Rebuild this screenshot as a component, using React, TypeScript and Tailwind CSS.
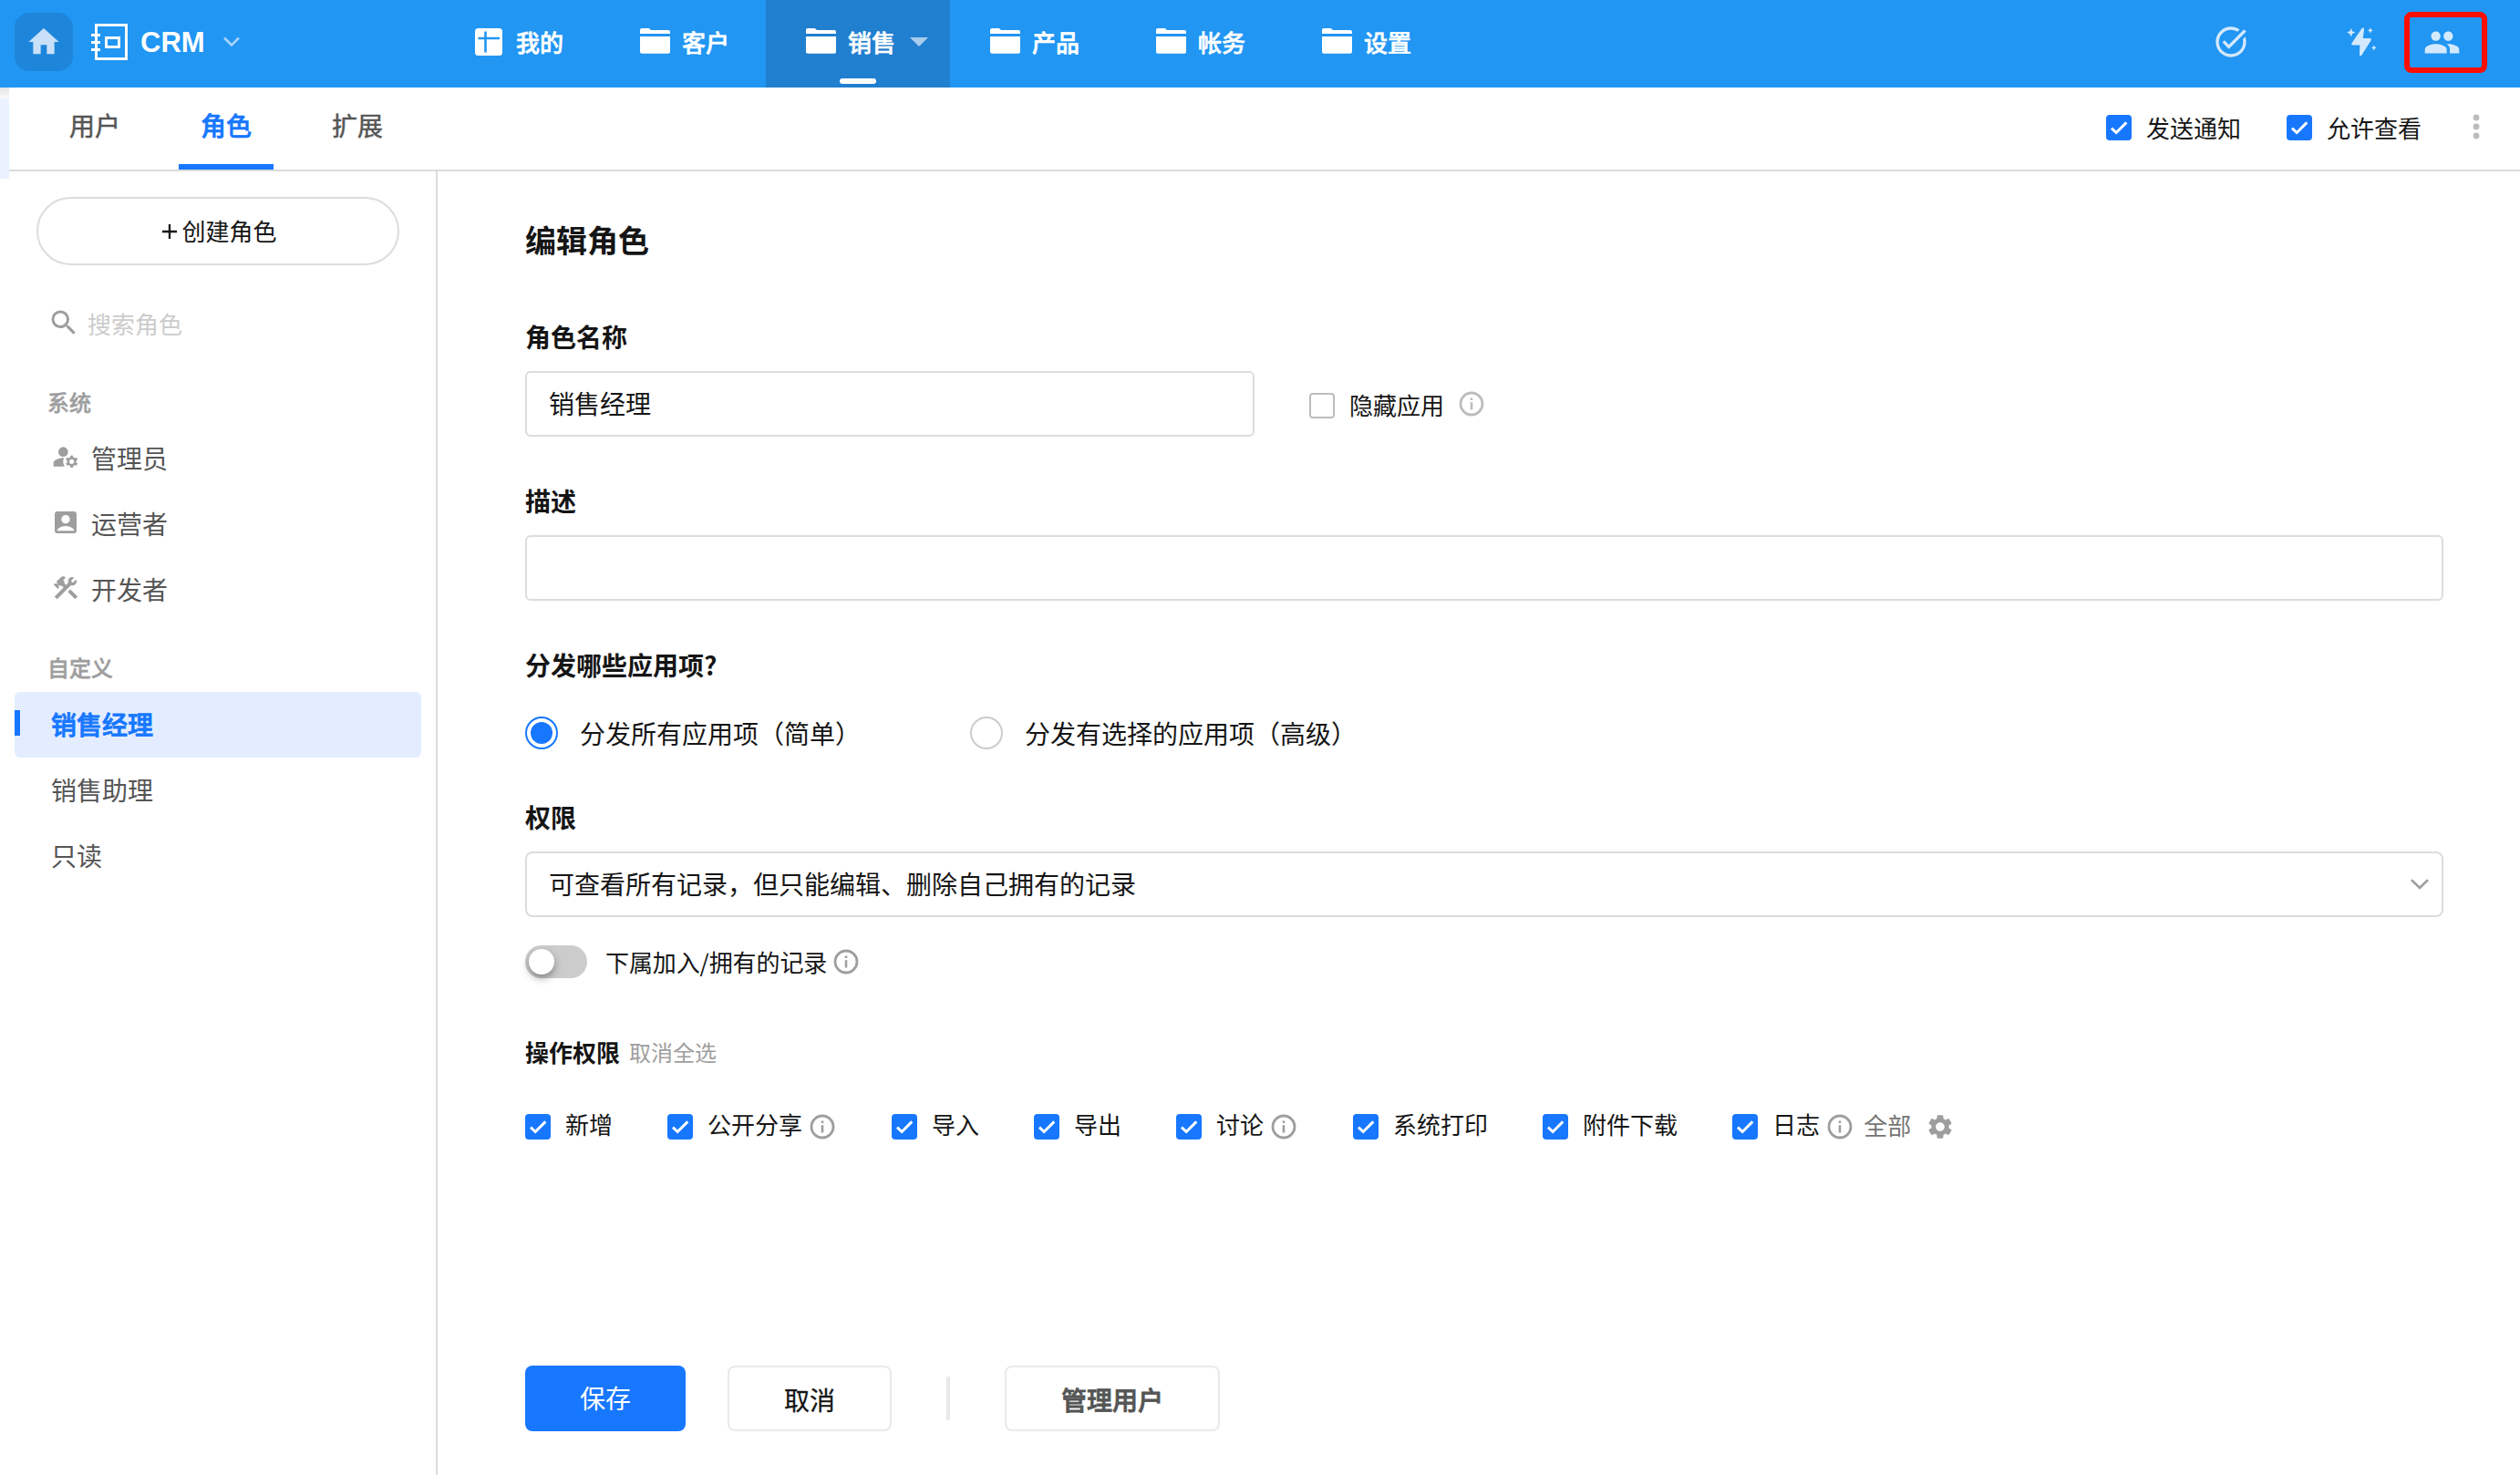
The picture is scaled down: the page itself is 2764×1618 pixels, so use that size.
import type { ReactNode } from "react";
import {
  MdAccountBox,
  MdConstruction,
  MdHome,
  MdManageAccounts,
  MdPeople,
  MdSearch,
  MdSettings,
  MdTaskAlt,
} from "react-icons/md";

type NavItem = {
  label: string;
  icon: ReactNode;
  active?: boolean;
};

type Permission = {
  label: string;
  info?: boolean;
};

const GridIcon = () => (
  <svg viewBox="0 0 34 34" className="w-[34px] h-[34px] shrink-0 overflow-visible">
    <rect x="1" y="2" width="30" height="30" rx="3.5" fill="#fff" />
    <path d="M4.5 13H28M12.5 5.5V28.5" stroke="#2196f3" strokeWidth="2.6" />
  </svg>
);

const FolderIcon = () => (
  <svg viewBox="0 0 34 34" className="w-[34px] h-[34px] shrink-0 overflow-visible">
    <path d="M0 8V4.2C0 2.8.8 2 2.2 2h7C10.8 2 11 4 12.5 4H31a2 2 0 0 1 2 2v2z" fill="#fff" />
    <path d="M0 11H33V27.8a2 2 0 0 1-2 2H2a2 2 0 0 1-2-2z" fill="#fff" />
  </svg>
);

const LogoIcon = () => (
  <svg viewBox="0 0 40 40" fill="none" stroke="#fff" className="w-10 h-10">
    <path d="M5.5 1.5H38.5V38.5H5.5zM0 12.5H10M0 20.5H10M0 28.5H10" strokeWidth="3" />
    <rect x="16.5" y="15.5" width="14" height="10" strokeWidth="3" />
  </svg>
);

const BoltIcon = () => (
  <svg viewBox="0 0 34 32" fill="currentColor" className="w-[34px] h-8">
    <path d="M16.8.8c1.2-.6 2.4 0 2.2 1.4L17.8 12h7.6c1.4 0 1.9 1 1.2 2.2L16.4 30.4c-.9 1.3-2.6 1-2.5-.6l.5-10.4H6.6c-1.3 0-1.8-1-1.1-2.2z" />
    <path d="M4.7.8 6 4.3 9.6 5.6 6 6.9 4.7 10.6 3.4 6.9 0 5.6 3.4 4.3zM25.8 0l.9 2.4 2.4.9-2.4.9-.9 2.5-.9-2.5-2.4-.9 2.4-.9zM29.8 19.2l.9 2.3 2.3.9-2.3.9-.9 2.4-.9-2.4-2.3-.9 2.3-.9z" />
  </svg>
);

const InfoIcon = ({ className = "text-[#9e9e9e]" }: { className?: string }) => (
  <svg viewBox="0 0 28 28" fill="none" stroke="currentColor" className={`w-7 h-7 shrink-0 ${className}`}>
    <circle cx="14" cy="14" r="12" strokeWidth="2.8" />
    <path d="M14 12.3V20.5M14 7.6V10" strokeWidth="2.6" />
  </svg>
);

const Checkbox = ({ checked = true }: { checked?: boolean }) =>
  checked ? (
    <span className="flex w-7 h-7 shrink-0 items-center justify-center rounded bg-[#1777ff]">
      <svg viewBox="0 0 28 28" fill="none" stroke="#fff" strokeWidth="3" className="w-7 h-7">
        <path d="M6 14.6 11.2 19.5 22.3 8.4" />
      </svg>
    </span>
  ) : (
    <span className="w-7 h-7 shrink-0 rounded border-2 border-[#bdbdbd]" />
  );

const navItems: NavItem[] = [
  { label: "我的", icon: <GridIcon /> },
  { label: "客户", icon: <FolderIcon /> },
  { label: "销售", icon: <FolderIcon />, active: true },
  { label: "产品", icon: <FolderIcon /> },
  { label: "帐务", icon: <FolderIcon /> },
  { label: "设置", icon: <FolderIcon /> },
];

const systemRoles = [
  { label: "管理员", icon: <MdManageAccounts className="w-8 h-8" /> },
  { label: "运营者", icon: <MdAccountBox className="w-8 h-8" /> },
  { label: "开发者", icon: <MdConstruction className="w-8 h-8" /> },
];

const permissions: Permission[] = [
  { label: "新增" },
  { label: "公开分享", info: true },
  { label: "导入" },
  { label: "导出" },
  { label: "讨论", info: true },
  { label: "系统打印" },
  { label: "附件下载" },
  { label: "日志", info: true },
];

const TopBar = () => (
  <header className="flex h-24 shrink-0 bg-[#2196f3] text-white">
    <div className="flex w-[476px] items-center pb-1 pl-4">
      <div className="flex w-16 h-16 items-center justify-center rounded-2xl bg-black/10">
        <MdHome className="w-10 h-10 text-[#c8e0f8]" />
      </div>
      <div className="ml-5">
        <LogoIcon />
      </div>
      <span className="ml-3.5 pt-px font-['Liberation_Sans'] text-[31px] leading-10 font-bold">CRM</span>
      <svg viewBox="0 0 18 12" fill="none" stroke="#a9d3fa" strokeWidth="2.6" className="ml-5 w-[18px] h-3">
        <path d="M1 1.5 9 9.5 17 1.5" />
      </svg>
    </div>

    <nav className="flex">
      {navItems.map((item) => (
        <div
          key={item.label}
          className={`relative flex items-center pb-1 pl-11 ${
            item.active ? "w-[202px] bg-[#217fd0]" : "w-[182px]"
          }`}
        >
          {item.icon}
          <span className="ml-3 text-[26px] leading-8 font-medium [-webkit-text-stroke:0.6px]">{item.label}</span>
          {item.active && (
            <>
              <svg viewBox="0 0 20 10" className="ml-4 w-5 h-[10px]">
                <path d="M0 0H20L10 10z" fill="#a9cbec" />
              </svg>
              <span className="absolute bottom-1 left-[81px] h-1.5 w-10 rounded-full bg-white" />
            </>
          )}
        </div>
      ))}
    </nav>

    <div className="ml-auto flex items-center pr-9 pb-1 text-[#d3e9fd]">
      <MdTaskAlt className="w-10 h-10" />
      <div className="ml-[107px]">
        <BoltIcon />
      </div>
      <div className="ml-[29px] flex h-[67px] w-[91px] items-center justify-center rounded-lg border-[6px] border-[#ff0d00] pr-[9px]">
        <MdPeople className="w-[41px] h-[41px]" />
      </div>
    </div>
  </header>
);

const SubHeader = () => (
  <div className="flex h-[92px] shrink-0 border-b-2 border-[#dcdcdc] pl-9 text-[28px] text-[#555]">
    <div className="mr-6 ml-1.5 flex w-[104px] items-center justify-center pb-[9px] [-webkit-text-stroke:0.5px]">
      用户
    </div>
    <div className="relative ml-4 flex w-[104px] items-center justify-center pb-[9px] font-medium text-[#1777ff] [-webkit-text-stroke:0.6px]">
      角色
      <span className="absolute bottom-0 left-0 h-1.5 w-full bg-[#1777ff]" />
    </div>
    <div className="ml-10 flex w-[104px] items-center justify-center pb-[9px] [-webkit-text-stroke:0.5px]">扩展</div>

    <div className="ml-auto flex items-center pb-0.5 text-[26px] text-[#151515]">
      <Checkbox />
      <span className="ml-4 pb-px">发送通知</span>
      <span className="ml-[50px]">
        <Checkbox />
      </span>
      <span className="ml-4 pb-px">允许查看</span>
      <svg viewBox="0 0 8 28" fill="#bdbdbd" className="mr-11 mb-0.5 ml-14 w-2 h-7">
        <circle cx="4" cy="4" r="3.4" />
        <circle cx="4" cy="14" r="3.4" />
        <circle cx="4" cy="24" r="3.4" />
      </svg>
    </div>
  </div>
);

const Sidebar = () => (
  <aside className="w-[470px] shrink-0 border-r-2 border-[#dcdcdc] text-[28px] text-[#555]">
    <div className="mt-7 ml-[30px] flex h-[75px] w-[398px] items-center justify-center rounded-full border-2 border-[#dcdcdc] pl-1 text-[26px] text-[#151515]">
      <svg viewBox="0 0 16 16" stroke="currentColor" strokeWidth="2.3" className="mr-[5px] w-4 h-4">
        <path d="M0 8H16M8 0V16" />
      </svg>
      <span className="pb-[3px]">创建角色</span>
    </div>

    <div className="mt-[45px] ml-[42px] flex h-9 items-center text-[26px] text-[#ccc]">
      <MdSearch className="mr-2 w-9 h-9 text-[#9e9e9e]" />
      <span>搜索角色</span>
    </div>

    <div className="mt-[51px] ml-[42px] h-9 text-[24px] leading-9 font-medium text-[#9e9e9e] [-webkit-text-stroke:0.5px]">
      系统
    </div>
    <div className="mt-[7px]">
      {systemRoles.map((role) => (
        <div key={role.label} className="flex h-[72px] items-center pl-[46px]">
          <span className="mr-3 mb-0.5 text-[#9e9e9e]">{role.icon}</span>
          {role.label}
        </div>
      ))}
    </div>

    <div className="mt-8 ml-[42px] h-9 text-[24px] leading-9 font-medium text-[#9e9e9e] [-webkit-text-stroke:0.5px]">
      自定义
    </div>
    <div className="mt-[9px] ml-1.5">
      <div className="flex h-[72px] w-[446px] items-center rounded-md bg-[#e3edff] font-medium text-[#1777ff]">
        <span className="mr-[34px] mb-1 h-7 w-1.5 bg-[#1777ff]" />
        <span className="pb-[3px] [-webkit-text-stroke:0.8px]">销售经理</span>
      </div>
      <div className="flex h-[72px] items-center pb-[3px] pl-10">销售助理</div>
      <div className="flex h-[72px] items-center pb-[3px] pl-10">只读</div>
    </div>
  </aside>
);

const Label = ({ children }: { children: ReactNode }) => (
  <div className="h-10 text-[28px] leading-[38px] font-bold">{children}</div>
);

const RoleForm = () => (
  <main className="flex-1 pt-[52px] pr-[84px] pl-24 text-[28px] text-[#151515]">
    <h1 className="h-12 text-[34px] leading-[46px] font-bold">编辑角色</h1>

    <div className="mt-[62px]">
      <Label>角色名称</Label>
      <div className="mt-[17px] flex items-center">
        <div className="flex h-[72px] w-[800px] items-center rounded-md border-2 border-[#dcdcdc] pb-[3px] pl-6">
          销售经理
        </div>
        <div className="ml-[60px] flex items-center pt-1 text-[26px]">
          <Checkbox checked={false} />
          <span className="mr-4 ml-4 pb-[3px]">隐藏应用</span>
          <InfoIcon className="-mt-1 text-[#bdbdbd]" />
        </div>
      </div>
    </div>

    <div className="mt-[51px]">
      <Label>描述</Label>
      <div className="mt-[17px] h-[72px] rounded-md border-2 border-[#dcdcdc]" />
    </div>

    <div className="mt-[51px]">
      <Label>分发哪些应用项?</Label>
      <div className="mt-9 flex h-9 items-center">
        <span className="flex w-9 h-9 items-center justify-center rounded-full border-2 border-[#1777ff]">
          <span className="w-6 h-6 rounded-full bg-[#1777ff]" />
        </span>
        <span className="ml-6 w-[428px]">分发所有应用项（简单）</span>
        <span className="w-9 h-9 rounded-full border-2 border-[#ccc]" />
        <span className="ml-6">分发有选择的应用项（高级）</span>
      </div>
    </div>

    <div className="mt-[55px]">
      <Label>权限</Label>
      <div className="mt-[17px] flex h-[72px] items-center justify-between rounded-lg border-2 border-[#dcdcdc] pr-[14px] pl-6">
        <span className="pb-[3px]">可查看所有记录，但只能编辑、删除自己拥有的记录</span>
        <svg viewBox="0 0 20 12" fill="none" stroke="#9e9e9e" strokeWidth="2.6" className="w-5 h-3">
          <path d="M1 1.2 10 10 19 1.2" />
        </svg>
      </div>
      <div className="mt-[31px] flex h-9 items-center text-[26px]">
        <span className="flex h-9 w-[68px] items-center rounded-full bg-[#ccc] pl-1">
          <span className="w-7 h-7 rounded-full bg-white shadow-[0_4px_8px_rgba(0,0,0,0.35)]" />
        </span>
        <span className="mr-[7px] ml-5 pb-0.5 tracking-[-0.1px]">下属加入/拥有的记录</span>
        <InfoIcon />
      </div>
    </div>

    <div className="mt-16 flex h-9 items-center pb-[3px] text-[26px] font-bold">
      操作权限
      <span className="ml-2.5 text-[24px] font-normal text-[#9e9e9e]">取消全选</span>
    </div>

    <div className="mt-[45px] flex h-9 items-center text-[26px]">
      {permissions.map((item) => (
        <div key={item.label} className={`flex items-center last-of-type:mr-0 ${item.info ? "mr-[62px]" : "mr-[60px]"}`}>
          <Checkbox />
          <span className="ml-4 pb-[7px]">{item.label}</span>
          {item.info && <InfoIcon className="ml-2 text-[#9e9e9e]" />}
        </div>
      ))}
      <span className="ml-3 pb-[5px] text-[#757575]">全部</span>
      <MdSettings className="ml-4 w-8 h-8 text-[#9e9e9e]" />
    </div>

    <div className="mt-[244px] flex items-center">
      <div className="flex h-[72px] w-44 items-center justify-center rounded-lg bg-[#1777ff] pb-[3px] text-white">
        保存
      </div>
      <div className="ml-[46px] flex h-[72px] w-[180px] items-center justify-center rounded-lg border-2 border-[#eaeaea] pt-px [-webkit-text-stroke:0.3px]">
        取消
      </div>
      <span className="ml-[60px] h-12 w-1 bg-[#eaeaea]" />
      <div className="ml-[60px] flex h-[72px] w-[236px] items-center justify-center rounded-lg border-2 border-[#eaeaea] pt-px font-medium text-[#555] [-webkit-text-stroke:0.8px]">
        管理用户
      </div>
    </div>
  </main>
);

export default function App() {
  return (
    <div className="flex h-[1618px] w-[2764px] flex-col overflow-hidden bg-white font-['Noto_Sans_CJK_SC',sans-serif] whitespace-nowrap">
      <TopBar />
      <div className="flex flex-1">
        {/* Sliver of the page behind the drawer */}
        <div className="w-[10px] shrink-0">
          <div className="h-3 bg-gradient-to-b from-[#e3e3e3] to-[#fafafa]" />
          <div className="h-[88px] bg-[#eaf2ff]" />
        </div>
        <div className="flex flex-1 flex-col">
          <SubHeader />
          <div className="flex flex-1">
            <Sidebar />
            <RoleForm />
          </div>
        </div>
      </div>
    </div>
  );
}
